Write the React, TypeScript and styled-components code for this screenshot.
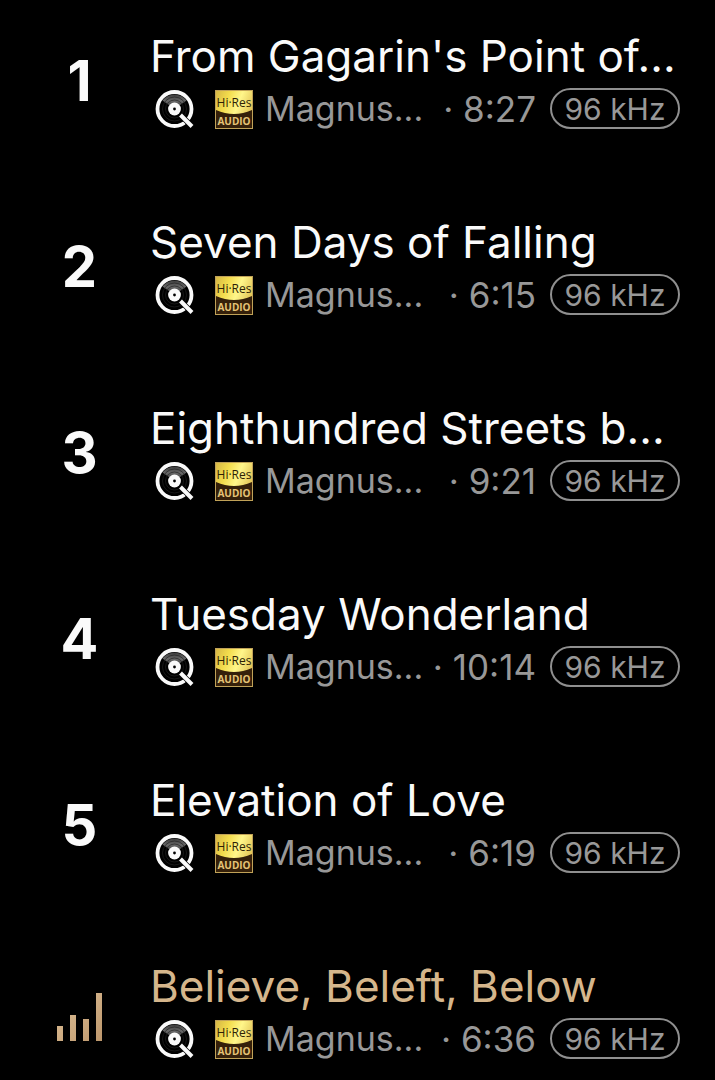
import React from "react";
import styled, { createGlobalStyle } from "styled-components";

const GlobalStyle = createGlobalStyle`
  * { box-sizing: border-box; }
  body {
    margin: 0;
    background: #000;
    color: #fafafa;
    font-family: Inter, "Liberation Sans", sans-serif;
    overflow: hidden;
  }
`;

const TrackList = styled.ol`
  margin: 0;
  padding: 0;
  list-style: none;
`;

const Track = styled.li`
  display: flex;
  align-items: center;
  padding: 27px 35px 57px 0;
`;

const Position = styled.div`
  flex: 0 0 150px;
  padding: 6px 0 0 9px;
  display: flex;
  justify-content: center;
  font-size: 56px;
  line-height: 60px;
  font-weight: 700;
`;

const Details = styled.div`
  flex: 1;
  min-width: 0;
`;

const Title = styled.div<{ $playing?: boolean }>`
  height: 60px;
  font-size: 44px;
  line-height: 58px;
  white-space: nowrap;
  color: ${(p) => (p.$playing ? "#d5b68c" : "#fafafa")};
`;

const Meta = styled.div`
  display: flex;
  align-items: center;
  height: 42px;
  padding-left: 4px;
  color: #989898;
  font-size: 35px;
  line-height: 42px;
  white-space: nowrap;
`;

const Artist = styled.span`
  flex: 1;
  padding: 2px 0 0 12px;
  font-size: 34px;
`;

const Duration = styled.span`
  padding: 2px 14px 0 0;
`;

const Rate = styled.span`
  width: 130px;
  height: 41px;
  border: 2px solid #8f8f8f;
  border-radius: 21px;
  text-align: center;
  font-size: 30px;
  line-height: 39px;
`;

const ServiceLogo = styled.svg`
  flex: none;
  width: 42px;
  height: 42px;
  margin: 2px 19px 0 0;
`;

const QualityLogo = styled.svg`
  flex: none;
  width: 38px;
  height: 39px;
  margin-top: 2px;
`;

const Bars = styled.svg`
  width: 45px;
  height: 48px;
  margin-top: 11px;
`;

const QobuzIcon = () => (
  <ServiceLogo viewBox="0 0 42 42" role="img" aria-label="Qobuz">
    <defs>
      <linearGradient id="disc" x1="0" y1="0" x2="0" y2="1">
        <stop offset="0" stopColor="#3c3c3c" />
        <stop offset="0.45" stopColor="#686868" />
        <stop offset="1" stopColor="#303030" />
      </linearGradient>
    </defs>
    <circle cx="20.5" cy="21" r="17" fill="#000" stroke="#fafafa" strokeWidth="3.8" />
    <path d="M20.5 21 8.5 12.5A15 15 0 0 1 32.5 12.5Z" fill="url(#disc)" />
    <circle cx="20.5" cy="21" r="12" fill="none" stroke="#222" strokeWidth="0.7" />
    <circle cx="20.5" cy="21" r="9" fill="none" stroke="#222" strokeWidth="0.7" />
    <circle cx="20.5" cy="21" r="6.4" fill="#fafafa" />
    <circle cx="20.5" cy="21" r="1.4" fill="#000" />
    <path d="M27.5 28 37 37.5" stroke="#000" strokeWidth="5.5" />
    <path d="M26.5 27 38 38.5" stroke="#fafafa" strokeWidth="4" />
  </ServiceLogo>
);

const HiResIcon = () => (
  <QualityLogo viewBox="0 0 38 39" role="img" aria-label="Hi-Res Audio">
    <defs>
      <linearGradient id="gold" x1="0" y1="0" x2="1" y2="0.4">
        <stop offset="0" stopColor="#d3b445" />
        <stop offset="0.35" stopColor="#f3dc4c" />
        <stop offset="0.65" stopColor="#fff68a" />
        <stop offset="1" stopColor="#e3c557" />
      </linearGradient>
    </defs>
    <rect width="38" height="39" fill="url(#gold)" />
    <path d="M1 20Q19 28 37 20V38H1Z" fill="#35200a" />
    <rect x="0.5" y="0.5" width="37" height="38" fill="none" stroke="#c0a258" />
    <text x="19" y="17" textAnchor="middle" fontFamily="Open Sans, sans-serif" fontSize="12" fontWeight="500" fill="#2e1f05">
      Hi·Res
    </text>
    <text x="19" y="35" textAnchor="middle" fontFamily="Open Sans, sans-serif" fontSize="10" fontWeight="700" fill="#e5c376">
      AUDIO
    </text>
  </QualityLogo>
);

const PlayingIcon = () => (
  <Bars viewBox="0 0 45 48" role="img" aria-label="Now playing">
    <defs>
      <linearGradient id="bar" x1="0" y1="0" x2="1" y2="1">
        <stop offset="0" stopColor="#dfc29a" />
        <stop offset="1" stopColor="#bd976c" />
      </linearGradient>
    </defs>
    <path d="M0 33h6v15H0zM13 22h6v26h-6zM26 26h6v22h-6zM39 0h6v48h-6z" fill="url(#bar)" />
  </Bars>
);

const tracks = [
  { title: "From Gagarin's Point of...", time: "8:27" },
  { title: "Seven Days of Falling", time: "6:15" },
  { title: "Eighthundred Streets b...", time: "9:21" },
  { title: "Tuesday Wonderland", time: "10:14" },
  { title: "Elevation of Love", time: "6:19" },
  { title: "Believe, Beleft, Below", time: "6:36", playing: true },
];

export default function App() {
  return (
    <>
      <GlobalStyle />
      <TrackList>
        {tracks.map((track, i) => (
          <Track key={track.title}>
            <Position>{track.playing ? <PlayingIcon /> : i + 1}</Position>
            <Details>
              <Title $playing={track.playing}>{track.title}</Title>
              <Meta>
                <QobuzIcon />
                <HiResIcon />
                <Artist>Magnus...</Artist>
                <Duration>· {track.time}</Duration>
                <Rate>96 kHz</Rate>
              </Meta>
            </Details>
          </Track>
        ))}
      </TrackList>
    </>
  );
}
